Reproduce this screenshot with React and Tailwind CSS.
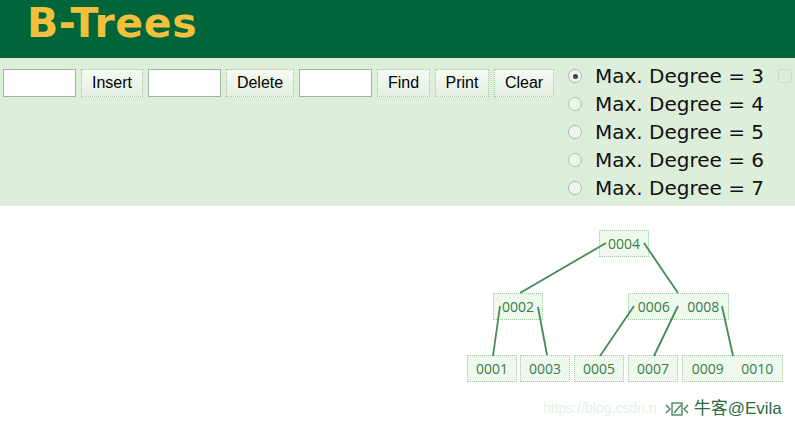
import React from 'react';

// key boxes of the tree, coordinates inside the canvas area (top of canvas = y 206)
const NODES = [
  { x: 599, y: 24, keys: ['0004'] },
  { x: 493, y: 87, keys: ['0002'] },
  { x: 628, y: 87, keys: ['0006', '0008'] },
  { x: 467, y: 149, keys: ['0001'] },
  { x: 520, y: 149, keys: ['0003'] },
  { x: 574, y: 149, keys: ['0005'] },
  { x: 628, y: 149, keys: ['0007'] },
  { x: 682, y: 149, keys: ['0009', '0010'] },
];

const EDGES = [
  [606, 37, 520, 87],
  [644, 37, 678, 87],
  [500, 100, 493, 150],
  [538, 101, 547, 149],
  [634, 100, 600, 150],
  [678, 100, 654, 150],
  [722, 100, 733, 150],
];

const Btn = ({ children, w }) => (
  <button
    className={`h-[28px] ${w} border border-[#a6c6a6] border-dotted bg-gradient-to-b from-[#f6fbf4] to-[#e2efdf] text-[16px] text-black`}
    style={{ fontFamily: 'Arial, "Liberation Sans", sans-serif' }}
  >
    {children}
  </button>
);

const Field = () => (
  <input className="h-[28px] w-[73px] border border-[#9dbb9d] bg-white outline-none" />
);

const Radio = ({ on, label }) => (
  <div className="flex items-center h-[28px]">
    <span className="shrink-0 w-[14px] h-[14px] rounded-full border border-[#a9bfa9] bg-[#eef5ec] flex items-center justify-center">
      {on && <span className="w-[5px] h-[5px] rounded-full bg-[#444]" />}
    </span>
    <span className="ml-[13px] text-[20px] text-[#111] whitespace-nowrap">{label}</span>
  </div>
);

export default function App() {
  return (
    <div className="w-[795px] h-[424px] bg-white overflow-hidden" style={{ fontFamily: '"DejaVu Sans", Verdana, sans-serif' }}>
      <div className="h-[58px] bg-[#00663a] pl-[27px]">
        <h1 className="text-[41px] font-bold text-[#f1c03c] leading-[46px] tracking-[0.6px]">B-Trees</h1>
      </div>

      <div className="h-[148px] bg-[#ddeeda] flex items-start">
        <div className="shrink-0 flex gap-[5px] pl-[3px] pt-[11px]">
          <Field />
          <Btn w="w-[62px]">Insert</Btn>
          <Field />
          <Btn w="w-[68px]">Delete</Btn>
          <Field />
          <Btn w="w-[53px]">Find</Btn>
          <Btn w="w-[54px]">Print</Btn>
          <Btn w="w-[60px]">Clear</Btn>
        </div>
        <div className="shrink-0 flex flex-col pt-[4px] ml-[14px]">
          {[3, 4, 5, 6, 7].map((d) => (
            <Radio key={d} on={d === 3} label={`Max. Degree = ${d}`} />
          ))}
        </div>
        <span className="shrink-0 mt-[11px] ml-[14px] w-[14px] h-[14px] border border-dotted border-[#b8ccb8] rounded-[3px]" />
      </div>

      <div className="relative h-[218px]">
        {NODES.map((n, i) => (
          <div
            key={i}
            className="absolute h-[27px] flex border border-[#9fcb9f] border-dotted bg-[#eef8ec] text-[14px] text-[#3a7c49]"
            style={{ left: n.x, top: n.y, width: n.keys.length * 51 - 1, fontFamily: '"Open Sans", "Noto Sans", sans-serif' }}
          >
            {n.keys.map((k) => (
              <span key={k} className="w-[50px] flex items-center justify-center">{k}</span>
            ))}
          </div>
        ))}
        <svg className="absolute inset-0 pointer-events-none" width="795" height="218">
          {EDGES.map(([x1, y1, x2, y2], i) => (
            <line key={i} x1={x1} y1={y1} x2={x2} y2={y2} stroke="#458a56" strokeWidth="1.8" />
          ))}
        </svg>

        <div className="absolute left-[543px] top-[190px] flex items-center" style={{ fontFamily: '"Liberation Sans", Arial, "Noto Sans CJK SC", sans-serif' }}>
          <span className="text-[14px] text-[#e4f2e4]">https://blog.csdn.n</span>
          <svg width="26" height="18" viewBox="0 0 26 18" className="ml-[7px]">
            <path d="M2 5 L6 9 L2 13 M24 5 L20 9 L24 13" stroke="#3d7f4c" strokeWidth="1.3" fill="none" />
            <rect x="8" y="3" width="10" height="12" fill="none" stroke="#3d7f4c" strokeWidth="1.3" />
            <path d="M10 13 L17 5" stroke="#3d7f4c" strokeWidth="1.3" />
          </svg>
          <span className="ml-[4px] text-[17px] text-[#2f6b3e]">牛客@Evila</span>
        </div>
      </div>
    </div>
  );
}
